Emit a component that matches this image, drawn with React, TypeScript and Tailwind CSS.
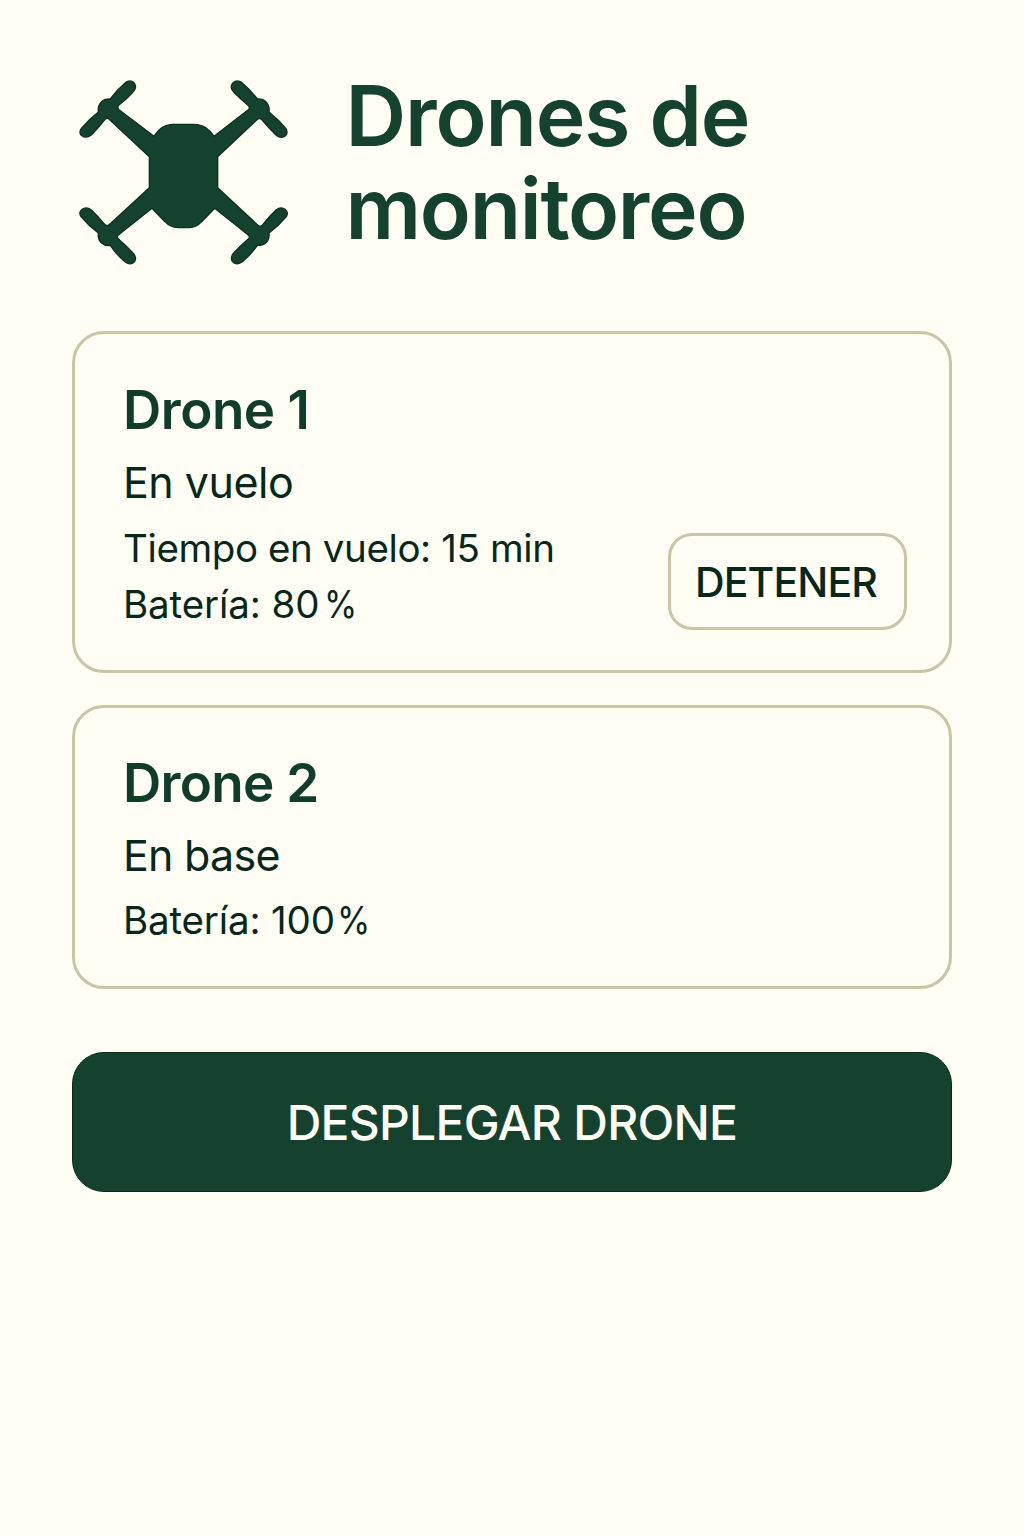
import type { ReactNode } from "react";

function DroneIcon() {
  return (
    <svg
      viewBox="0 0 720 660"
      className="h-[220px] w-[240px] shrink-0 fill-[#15422f] stroke-[#0a3020]"
      strokeWidth="4"
      strokeLinejoin="round"
      aria-hidden="true"
    >
      <path d="M270 217 C286 193 300 182 328 181 H390 C418 182 434 193 450 217 L552 138 Q560 131 552 124 Q528 104 507 82 C492 62 514 42 534 56 Q560 78 580 105 C602 103 618 119 615 144 Q644 167 666 194 C677 216 653 228 636 213 Q615 192 597 171 Q588 158 577 169 L461 278 V371 L580 482 Q590 492 598 480 Q615 458 636 438 C656 422 678 441 667 458 Q644 486 615 507 C618 532 602 545 580 544 Q560 573 534 594 C512 608 494 590 507 569 Q528 547 552 526 Q560 519 552 512 L452 433 L413 473 Q398 490 375 491 H343 Q318 490 303 473 L264 433 L164 512 Q156 519 164 526 Q188 547 209 569 C224 590 204 608 184 594 Q158 573 139 544 C117 547 100 532 103 507 Q74 486 51 458 C39 441 62 422 82 438 Q103 458 121 480 Q129 490 138 480 L256 371 V278 L138 168 Q129 157 120 170 Q103 192 82 213 C62 228 39 213 52 193 Q74 167 103 144 C100 119 117 104 139 105 Q158 78 184 56 C204 42 224 62 209 82 Q190 104 164 124 Q158 131 166 138 Z" />
    </svg>
  );
}

function Card({ children }: { children: ReactNode }) {
  return (
    <section className="flex items-end justify-between rounded-[32px] border-[3px] border-[#c9c5a5] pl-[48px] pr-[42px] pt-[43px]">
      {children}
    </section>
  );
}

function Percent() {
  return <span className="inline-block origin-left scale-x-[0.88]">%</span>;
}

export default function App() {
  return (
    <main className="min-h-[1536px] w-[1024px] bg-[#fffdf4] font-['Inter',sans-serif] text-[#06281b]">
      <header className="flex h-[331px] items-start pl-16 pt-16">
        <DroneIcon />
        <h1 className="ml-[41.5px] mt-[5px] whitespace-nowrap text-[84px] font-semibold leading-[93px] text-[#15422f]">
          <span className="block tracking-[-1.1px]">Drones de</span>
          <span className="block tracking-[-1.3px]">monitoreo</span>
        </h1>
      </header>

      <div className="mx-[72px]">
        <Card>
          <div className="whitespace-nowrap pb-[38px]">
            <h2 className="text-[53px] font-semibold leading-[66px] tracking-[-0.5px] text-[#103c2a]">Drone 1</h2>
            <p className="mt-[11px] text-[43px] leading-[56px] tracking-[-0.5px]">En vuelo</p>
            <p className="mt-[10px] text-[38.5px] leading-[56px] tracking-[-0.4px]">Tiempo en vuelo: 15 min</p>
            <p className="text-[38.5px] leading-[56px] tracking-[-0.1px]">
              Batería: 80<span className="inline-block w-[5px]" />
              <Percent />
            </p>
          </div>
          <button className="mb-[40px] flex h-[97px] w-[239px] items-center justify-center rounded-[24px] border-[3px] border-[#c9c5a5] pr-[3px] pt-[2px] text-[41px] font-medium leading-none tracking-[-0.9px]">
            DETENER
          </button>
        </Card>
        <div className="h-8" />
        <Card>
          <div className="whitespace-nowrap pb-[38px]">
            <h2 className="text-[53px] font-semibold leading-[64px] tracking-[-0.7px] text-[#103c2a]">Drone 2</h2>
            <p className="mt-[12px] text-[43px] leading-[56px] tracking-[-0.75px]">En base</p>
            <p className="mt-[9px] text-[38.5px] leading-[56px] tracking-[-0.15px]">
              Batería: 100<span className="inline-block w-[2px]" />
              <Percent />
            </p>
          </div>
        </Card>
        <button className="mt-[63px] flex h-[140px] w-full items-center justify-center rounded-[32px] border border-[#062a1c] bg-[#15422f] pt-[2px] text-[48px] font-medium leading-none tracking-[-0.75px] text-[#fffdf4]">
          DESPLEGAR DRONE
        </button>
      </div>
    </main>
  );
}
